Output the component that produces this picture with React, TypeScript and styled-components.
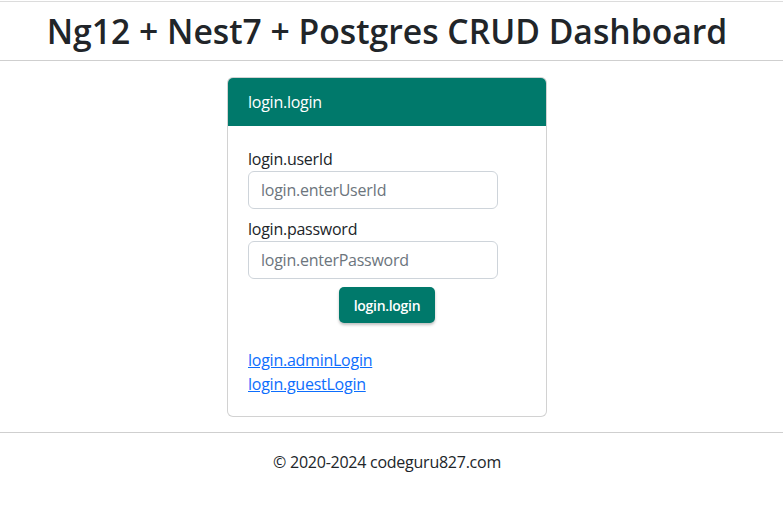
import React from "react";
import styled, { createGlobalStyle } from "styled-components";

const Global = createGlobalStyle`
  html, body { margin: 0; padding: 0; background: #fff; }
  body {
    font-family: "Open Sans", "Noto Sans", "Liberation Sans", sans-serif;
    font-size: 16px;
    line-height: 1.5;
    color: #212529;
    letter-spacing: -0.25px;
  }
  * { box-sizing: border-box; }
`;

const Page = styled.div`
  display: flex;
  flex-direction: column;
  padding-top: 1px;
`;

const Header = styled.header`
  border-top: 1px solid #dcdcdc;
  border-bottom: 1px solid #cfcfcf;
  padding: 0 9px 0 0;
  height: 60px;
  display: flex;
  align-items: center;
  justify-content: center;
`;

const Title = styled.h1`
  margin: 0;
  font-size: 33.7px;
  font-weight: 600;
  line-height: 1.2;
  color: #212529;
  letter-spacing: 0;
`;

const Main = styled.main`
  display: flex;
  justify-content: center;
  padding: 16px 9px 15px 0;
`;

const Card = styled.div`
  width: 320px;
  border: 1px solid rgba(0, 0, 0, 0.175);
  border-radius: 6px;
  overflow: hidden;
  background: #fff;
`;

const CardHeader = styled.div`
  background: #00796b;
  color: #fff;
  padding: 12px 20px;
  font-size: 16px;
  line-height: 24px;
`;

const CardBody = styled.div`
  padding: 21px 20px 20px;
  display: flex;
  flex-direction: column;
`;

const Field = styled.div`
  display: flex;
  flex-direction: column;
  margin-bottom: 8px;
`;

const Label = styled.label`
  font-size: 16px;
  line-height: 24px;
`;

const Input = styled.input`
  width: 250px;
  height: 38px;
  padding: 6px 12px;
  font: inherit;
  font-size: 16px;
  letter-spacing: -0.25px;
  color: #212529;
  border: 1px solid #ced4da;
  border-radius: 6px;
  outline: none;
  &::placeholder { color: #6c757d; }
`;

const ButtonRow = styled.div`
  display: flex;
  justify-content: center;
  margin-bottom: 25px;
`;

const Button = styled.button`
  width: 96px;
  height: 36px;
  background: #00796b;
  color: #fff;
  border: none;
  border-radius: 5px;
  font-family: "Open Sans", "Noto Sans", sans-serif;
  font-weight: 600;
  font-size: 14px;
  letter-spacing: -0.3px;
  box-shadow: 0 2px 3px rgba(0, 0, 0, 0.25);
  cursor: pointer;
`;

const Links = styled.div`
  display: flex;
  flex-direction: column;
  align-items: flex-start;
`;

const Link = styled.a`
  color: #0d6efd;
  text-decoration: underline;
  line-height: 24px;
`;

const Footer = styled.footer`
  border-top: 1px solid #cfcfcf;
  padding: 17px 9px 0 0;
  text-align: center;
  font-size: 16px;
  line-height: 24px;
`;

export default function App() {
  return (
    <>
      <Global />
      <Page>
        <Header>
          <Title>Ng12 + Nest7 + Postgres CRUD Dashboard</Title>
        </Header>
        <Main>
          <Card>
            <CardHeader>login.login</CardHeader>
            <CardBody>
              <Field>
                <Label htmlFor="uid">login.userId</Label>
                <Input id="uid" placeholder="login.enterUserId" />
              </Field>
              <Field>
                <Label htmlFor="pwd">login.password</Label>
                <Input id="pwd" type="password" placeholder="login.enterPassword" />
              </Field>
              <ButtonRow>
                <Button>login.login</Button>
              </ButtonRow>
              <Links>
                <Link href="#">login.adminLogin</Link>
                <Link href="#">login.guestLogin</Link>
              </Links>
            </CardBody>
          </Card>
        </Main>
        <Footer>© 2020-2024 codeguru827.com</Footer>
      </Page>
    </>
  );
}
